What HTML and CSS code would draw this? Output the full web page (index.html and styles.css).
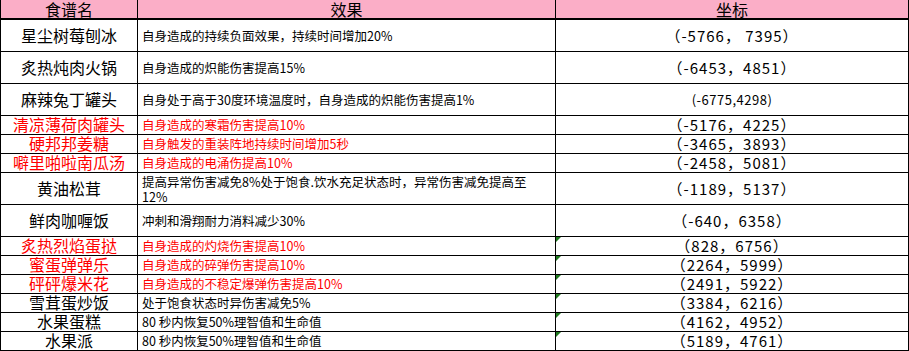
FILE: index.html
```html
<!DOCTYPE html>
<html lang="zh">
<head>
    <meta charset="UTF-8">
    <title>食谱坐标</title>
    <link rel="stylesheet" href="styles.css">
</head>
<body>
    <table class="recipes">
        <colgroup>
            <col class="col-name">
            <col class="col-effect">
            <col class="col-pos">
        </colgroup>
        <thead>
            <tr>
                <th>食谱名</th>
                <th>效果</th>
                <th>坐标</th>
            </tr>
        </thead>
        <tbody>
            <tr class="tall">
                <td class="name">星尘树莓刨冰</td>
                <td class="effect">自身造成的持续负面效果，持续时间增加20%</td>
                <td class="pos">（-5766， 7395）</td>
            </tr>
            <tr class="tall">
                <td class="name">炙热炖肉火锅</td>
                <td class="effect">自身造成的炽能伤害提高15%</td>
                <td class="pos">（-6453，4851）</td>
            </tr>
            <tr class="tall">
                <td class="name">麻辣兔丁罐头</td>
                <td class="effect">自身处于高于30度环境温度时，自身造成的炽能伤害提高1%</td>
                <td class="pos alt">(-6775,4298)</td>
            </tr>
            <tr class="red">
                <td class="name">清凉薄荷肉罐头</td>
                <td class="effect">自身造成的寒霜伤害提高10%</td>
                <td class="pos">（-5176，4225）</td>
            </tr>
            <tr class="red">
                <td class="name">硬邦邦姜糖</td>
                <td class="effect">自身触发的重装阵地持续时间增加5秒</td>
                <td class="pos">（-3465，3893）</td>
            </tr>
            <tr class="red">
                <td class="name">噼里啪啦南瓜汤</td>
                <td class="effect">自身造成的电涌伤提高10%</td>
                <td class="pos">（-2458，5081）</td>
            </tr>
            <tr class="tall">
                <td class="name">黄油松茸</td>
                <td class="effect top">提高异常伤害减免8%处于饱食.饮水充足状态时，异常伤害减免提高至<br>12%</td>
                <td class="pos">（-1189，5137）</td>
            </tr>
            <tr class="tall">
                <td class="name">鲜肉咖喱饭</td>
                <td class="effect">冲刺和滑翔耐力消料减少30%</td>
                <td class="pos">（-640，6358）</td>
            </tr>
            <tr class="red">
                <td class="name">炙热烈焰蛋挞</td>
                <td class="effect">自身造成的灼烧伤害提高10%</td>
                <td class="pos flag">（828，6756）</td>
            </tr>
            <tr class="red">
                <td class="name">蜜蛋弹弹乐</td>
                <td class="effect">自身造成的碎弹伤害提高10%</td>
                <td class="pos flag">（2264，5999）</td>
            </tr>
            <tr class="red">
                <td class="name">砰砰爆米花</td>
                <td class="effect">自身造成的不稳定爆弹伤害提高10%</td>
                <td class="pos flag">（2491，5922）</td>
            </tr>
            <tr>
                <td class="name">雪茸蛋炒饭</td>
                <td class="effect">处于饱食状态时异伤害减免5%</td>
                <td class="pos flag">（3384，6216）</td>
            </tr>
            <tr>
                <td class="name">水果蛋糕</td>
                <td class="effect">80 秒内恢复50%理智值和生命值</td>
                <td class="pos flag">（4162，4952）</td>
            </tr>
            <tr>
                <td class="name">水果派</td>
                <td class="effect">80 秒内恢复50%理智值和生命值</td>
                <td class="pos flag">（5189，4761）</td>
            </tr>
        </tbody>
    </table>
</body>
</html>
```

FILE: styles.css
```css
* {
    margin: 0;
    padding: 0;
    box-sizing: border-box;
}

body {
    background: #ffffff;
    color: #000000;
    font-family: "Noto Sans CJK SC", "DejaVu Sans", sans-serif;
}

.recipes {
    width: 908px;
    border-collapse: collapse;
    table-layout: fixed;
}

.col-name { width: 137px; }
.col-effect { width: 418px; }
.col-pos { width: 353px; }

.recipes th,
.recipes td {
    border: 1px solid #000000;
    height: 19px;
    line-height: 17px;
    padding: 0;
    overflow: hidden;
    white-space: nowrap;
}

.recipes th {
    background: #fbaec7;
    font-weight: normal;
    font-size: 16px;
    line-height: 18px;
    text-align: center;
    border-top: none;
    border-bottom-width: 2px;
}

.recipes tr.tall td {
    height: 32px;
}

.name {
    font-size: 16px;
    text-align: center;
}

.effect {
    font-size: 12.5px;
    padding-left: 4px !important;
    text-align: left;
}

.effect.top {
    vertical-align: top;
    line-height: 15px;
    white-space: normal;
    padding-top: 1px !important;
}

.pos {
    font-size: 15px;
    letter-spacing: 1px;
    text-align: center;
    position: relative;
}

.pos.alt {
    font-size: 13px;
    letter-spacing: 0.5px;
}

.recipes tr.red .name,
.recipes tr.red .effect {
    color: #ff0000;
}

.pos.flag::before {
    content: "";
    position: absolute;
    top: 0;
    left: 0;
    border-top: 5px solid #1f7a1f;
    border-right: 5px solid transparent;
}
```
